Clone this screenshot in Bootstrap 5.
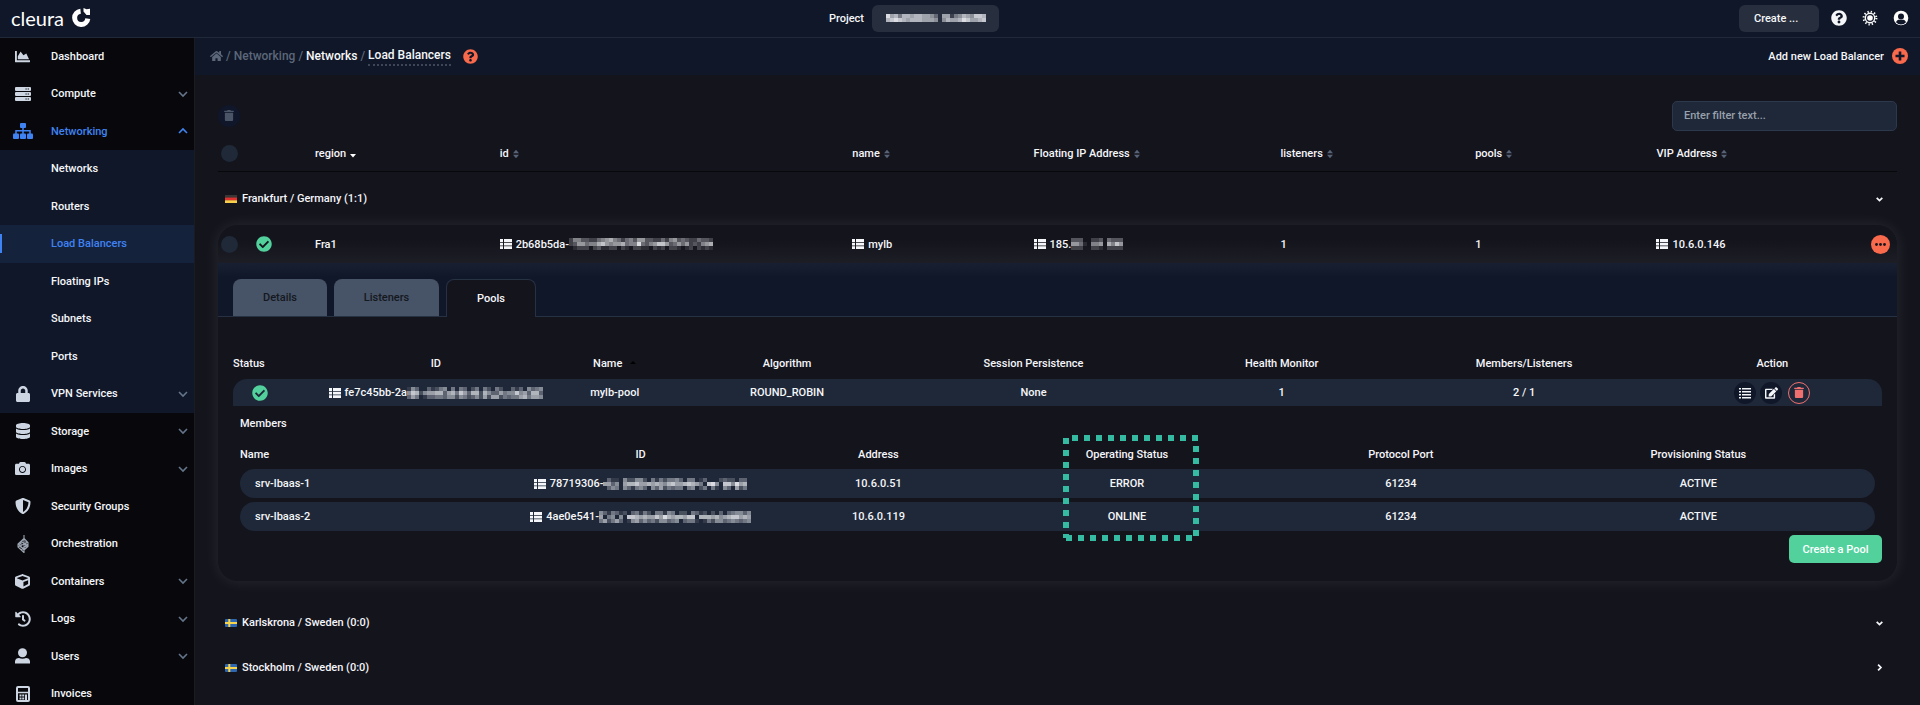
<!DOCTYPE html>
<html lang="en" data-bs-theme="dark">
<head>
<meta charset="utf-8">
<meta name="viewport" content="width=device-width, initial-scale=1">
<title>Cleura – Load Balancers</title>
<link rel="stylesheet" href="https://cdn.jsdelivr.net/npm/bootstrap@5.3.0/dist/css/bootstrap.min.css">
<style>
:root{--navy:#101728;--panel:#14141d;--slate:#1f2838;--text:#f4f6f9;--muted:#5b6678;--blue:#3f83f3;--orange:#f9694c;--green:#52d19d}
body{font-family:Roboto,"Liberation Sans",sans-serif;font-size:11px;line-height:17px;font-weight:500;color:var(--text);background:var(--panel)}
svg{display:block;flex:none}
a{color:inherit;text-decoration:none}
button{font:inherit;color:inherit}
.topbar{height:38px;background:var(--navy);border-bottom:1px solid #202938;padding-right:11px}
.topbar>div{flex:1 1 0}
.brand{font:400 20px/24px Lato,sans-serif;color:#fff;padding-left:11px;gap:8px}
.project{gap:8px;padding-right:81px}
.tools{gap:15px}
.pill{background:#272e3d;border:0;border-radius:6px;height:27px}
.pill-project{width:127px}
.pill-create{width:80px;padding:0 0 0 15px;text-align:left;margin-right:-3px}
.icon-btn{background:none;border:0;padding:0}
.side{width:195px;background:#08080c;border-right:1px solid #1b1c22;flex:none}
.side a{height:37px;display:flex;align-items:center;position:relative;padding:0 6px 0 12px}
.side li:nth-child(even) a{height:38px}
.side .ico{width:21px;display:flex;justify-content:center;margin-right:18px;color:#ccd5e1}
.side .chev{margin-left:auto;color:#64748b}
.side .open,.side .open .ico,.side .open .chev{color:var(--blue)}
.side .sub{background:var(--navy)}
.side .current{background:#15223c;color:var(--blue)}
.side .current::before{content:"";position:absolute;left:0;top:9px;width:2px;height:19px;background:var(--blue)}
.crumbs{height:37px;background:var(--navy);padding:0 12px 0 15px}
.crumbs ol{font-size:12px;gap:3px;color:#5c6779}
.crumbs .here{border-bottom:2px dotted #3c4657;color:var(--text)}
.about{color:var(--orange);margin-left:12px}
.work{padding:26px 23px 0}
.trash-all{width:22px;height:22px;border-radius:50%;background:#10172a;color:#4a5567}
.filter{width:225px;height:30px;border:1px solid #2c384b;border-radius:5px;background:var(--slate);color:var(--text);font-weight:500;padding:0 11px}
.filter::placeholder{color:#98a0ab;opacity:1}
.tick{appearance:none;width:17px;height:17px;border-radius:50%;background:#1f2937;margin:0 0 0 3px;display:block}
.grid-table{width:100%;table-layout:fixed;border-collapse:collapse}
.grid-table th,.grid-table td{padding:0;font-weight:500;white-space:nowrap}
.grid-table thead th{height:41px;padding-top:6px;border-bottom:1px solid #08080c}
.g-tick{width:33px}.g-state{width:64px}.g-region{width:11%}.g-id{width:21%}.g-name{width:10.8%}.g-fip{width:14.7%}.g-lis{width:11.6%}.g-pool{width:10.8%}.g-more{width:26px}
.region-row{height:45px;width:100%;background:none;border:0;padding:0 14px 0 7px;gap:5px}
.lb-card{border-radius:20px;box-shadow:0 0 16px rgba(255,255,255,.09);overflow:hidden;padding-bottom:18px;margin-bottom:19px}
.lb-row td{height:38px}
.lb-row{background:linear-gradient(#14141d 40%,#1d1d25)}
.state{color:var(--green)}
.state-row{margin-left:5px}
.state-pool{margin-left:19px}
.more{width:19px;height:19px;border-radius:50%;background:var(--orange);color:#14141d}
.tabs{background:linear-gradient(#172032,#101728 14px);border-bottom:1px solid #263144;padding:16px 15px 0;gap:7px}
.tabs .tab{height:37px;border:0;border-radius:8px 8px 0 0;background:#475366;color:#14181f;padding:0}
.tabs .tab.active{height:38px;margin-bottom:-1px;background:var(--panel);border:1px solid #263144;border-bottom:0;color:var(--text)}
.tab-first{width:94px}.tab-second{width:105px}.tab-third{width:90px}
.pane{padding:30px 15px 0;background:var(--panel)}
.pools{width:100%;table-layout:fixed;border-collapse:collapse;text-align:center}
.pools th,.members th{font-weight:500;padding:0;height:32px;white-space:nowrap}
.pools td{padding:0;height:27px;background:#1f2838}
.pools td:first-child{border-radius:14px 0 0 0}
.pools td:last-child{border-radius:0 14px 0 0}
.p-st{width:5.7%}.p-id{width:13.2%}.p-nm{width:8.5%}.p-al{width:12.4%}.p-se{width:17.5%}.p-he{width:12.6%}.p-me{width:16.8%}
.round{width:22px;height:22px;border-radius:50%;background:#101728;border:0;padding:0}
.round.danger{border:1px solid #f07070;background:none;color:#f07070;margin-left:2px}
.member-box{padding:0 7px}
.members{width:100%;table-layout:fixed;border-collapse:separate;border-spacing:0 4px;text-align:center}
.members th{height:21px}
.members td{padding:0;height:29px;background:#1f2838;white-space:nowrap}
.members td:first-child{border-radius:15px 0 0 15px;padding-left:15px}
.members td:last-child{border-radius:0 15px 15px 0}
.m-nm{width:15.8%}.m-id{width:17.4%}.m-ad{width:11.7%}.m-op{width:18.7%}.m-po{width:14.8%}
.members .marked{position:relative}
.outline{position:absolute;left:50%;top:-9px;margin-left:-64px;pointer-events:none}
.new-pool{height:28px;width:93px;border:0;border-radius:5px;background:var(--green);color:#fff}
.caption-row{height:34px}
</style>
</head>
<body class="vh-100 overflow-hidden d-flex flex-column">
<svg class="d-none">
<symbol id="check" viewBox="0 0 512 512"><path fill="currentColor" d="M504 256c0 136.967-111.033 248-248 248S8 392.967 8 256 119.033 8 256 8s248 111.033 248 248zM227.314 387.314l184-184c6.248-6.248 6.248-16.379 0-22.627l-22.627-22.627c-6.248-6.249-16.379-6.249-22.628 0L216 308.118l-70.059-70.059c-6.248-6.248-16.379-6.248-22.628 0l-22.627 22.627c-6.248 6.248-6.248 16.379 0 22.627l104 104c6.249 6.249 16.379 6.249 22.628.001z"/></symbol>
<symbol id="help" viewBox="0 0 512 512"><path fill="currentColor" d="M504 256c0 136.997-111.043 248-248 248S8 392.997 8 256C8 119.083 119.043 8 256 8s248 111.083 248 248zM262.655 90c-54.497 0-89.255 22.957-116.549 63.758-3.536 5.286-2.353 12.415 2.715 16.258l34.699 26.31c5.205 3.947 12.621 3.008 16.665-2.122 17.864-22.658 30.113-35.797 57.303-35.797 20.429 0 45.698 13.148 45.698 32.958 0 14.976-12.363 22.667-32.534 33.976C247.128 238.528 216 254.941 216 296v4c0 6.627 5.373 12 12 12h56c6.627 0 12-5.373 12-12v-1.333c0-28.462 83.186-29.647 83.186-106.667 0-58.002-60.165-102-116.531-102zM256 338c-25.365 0-46 20.635-46 46 0 25.364 20.635 46 46 46s46-20.636 46-46c0-25.365-20.635-46-46-46z"/></symbol>
<symbol id="trash" viewBox="0 0 448 512"><path fill="currentColor" d="M32 464a48 48 0 0 0 48 48h288a48 48 0 0 0 48-48V128H32zM432 32H312l-9.400-18.700A24 24 0 0 0 281.100 0H166.800a23.720 23.720 0 0 0-21.400 13.300L136 32H16A16 16 0 0 0 0 48v32a16 16 0 0 0 16 16h416a16 16 0 0 0 16-16V48a16 16 0 0 0-16-16z"/></symbol>
<symbol id="thlist" viewBox="0 0 12 12"><path fill="currentColor" d="M0 1h3v3H0zM4 1h8v3H4zM0 4.700h3v2.800H0zM4 4.700h8v2.800H4zM0 8.200h3V11H0zM4 8.200h8V11H4z"/></symbol>
<symbol id="down" viewBox="0 0 10 10"><path fill="none" stroke="currentColor" stroke-width="1.600" d="M1 3l4 4 4-4"/></symbol>
<symbol id="sort" viewBox="0 0 6 10"><path fill="#566276" d="M0 4.300 3 .8l3 3.500zM0 5.700h6L3 9.200z"/></symbol>
<symbol id="se" viewBox="0 0 12 8"><rect width="12" height="8" rx="1" fill="#2f66b0"/><path fill="#f6d44c" d="M3.300 0h2v8h-2zM0 3h12v2H0z"/></symbol>
</svg>

<header class="topbar d-flex align-items-center">
  <div><a href="#" class="brand d-inline-flex align-items-center">cleura
    <svg width="19" height="19" viewBox="0 0 19 19"><path fill="none" stroke="#fff" stroke-width="5" d="M8.600 3.300A6.600 6.600 0 1 0 15.800 10.600"/><path fill="#fff" d="M11.500 0l3 1.200 3.500-.4v6.200h-3.500l-3-3.400z"/></svg></a></div>
  <div class="project d-flex justify-content-center align-items-center"><span>Project</span>
    <button class="pill pill-project d-flex justify-content-center align-items-center" aria-label="Select project"><svg data-mosaic="9674776776653066145765887 7898767776665057667986678"></svg></button></div>
  <div class="tools d-flex justify-content-end align-items-center">
    <button class="pill pill-create">Create ...</button>
    <button class="icon-btn" aria-label="Help"><svg width="16" height="16"><use href="#help"/></svg></button>
    <button class="icon-btn" aria-label="Theme"><svg width="16" height="16" viewBox="0 0 16 16" fill="none" stroke="#fff"><circle cx="8" cy="8" r="2.800" fill="#fff" stroke="none"/><circle cx="8" cy="8" r="4.700" stroke-width="1.400"/><circle cx="8" cy="8" r="6.400" stroke-width="2" stroke-dasharray="1.300 2.050"/></svg></button>
    <button class="icon-btn" aria-label="Account"><svg width="16" height="16" viewBox="0 0 16 16"><circle cx="8" cy="8" r="7.300" fill="#fff"/><circle cx="8" cy="6.600" r="3" fill="#101728"/><path fill="#101728" d="M3 12.200c.8-2 2-2.500 3.200-2.500h3.600c1.200 0 2.400.5 3.200 2.500a6.500 6.500 0 0 1-10 0z"/></svg></button>
  </div>
</header>

<div class="d-flex flex-grow-1 overflow-hidden">
<nav class="side overflow-hidden">
  <ul class="list-unstyled m-0">
    <li><a href="#"><span class="ico"><svg width="15" height="15" viewBox="0 0 512 512"><path fill="currentColor" d="M500 384c6.600 0 12 5.400 12 12v40c0 6.600-5.400 12-12 12H12c-6.600 0-12-5.400-12-12V76c0-6.600 5.400-12 12-12h40c6.600 0 12 5.400 12 12v308h436zM372.700 159.500L288 216l-85.300-113.700c-5.100-6.800-15.500-6.300-19.900 1L96 248v104h384l-89.900-187.800c-3.200-6.500-11.400-8.700-17.400-4.700z"/></svg></span>Dashboard</a></li>
    <li><a href="#"><span class="ico"><svg width="16" height="14" viewBox="0 0 16 14"><g fill="currentColor"><rect width="16" height="4" rx="1"/><rect y="5" width="16" height="4" rx="1"/><rect y="10" width="16" height="4" rx="1"/></g><path stroke="#08080c" d="M10.500 2h1.200m1 0h1.200M10.500 7h1.200m1 0h1.200M10.500 12h1.200m1 0h1.200"/></svg></span>Compute<svg class="chev" width="10" height="10"><use href="#down"/></svg></a></li>
    <li><a href="#" class="open"><span class="ico"><svg width="20" height="16" viewBox="0 0 20 16" fill="currentColor"><rect x="7" width="6" height="5" rx="1"/><rect y="10.500" width="6" height="5.500" rx="1"/><rect x="7" y="10.500" width="6" height="5.500" rx="1"/><rect x="14" y="10.500" width="6" height="5.500" rx="1"/><path fill="none" stroke="currentColor" stroke-width="1.500" d="M10 4v7M3 11V7.800h14V11"/></svg></span>Networking<svg class="chev" width="10" height="10" viewBox="0 0 10 10"><path fill="none" stroke="currentColor" stroke-width="1.600" d="M1 7l4-4 4 4"/></svg></a></li>
    <li><a href="#" class="sub"><span class="ico"></span>Networks</a></li>
    <li><a href="#" class="sub"><span class="ico"></span>Routers</a></li>
    <li><a href="#" class="current"><span class="ico"></span>Load Balancers</a></li>
    <li><a href="#" class="sub"><span class="ico"></span>Floating IPs</a></li>
    <li><a href="#" class="sub"><span class="ico"></span>Subnets</a></li>
    <li><a href="#" class="sub"><span class="ico"></span>Ports</a></li>
    <li><a href="#" class="sub"><span class="ico"><svg width="14" height="16" viewBox="0 0 448 512"><path fill="currentColor" d="M400 224h-24v-72C376 68.200 307.800 0 224 0S72 68.200 72 152v72H48c-26.500 0-48 21.500-48 48v192c0 26.500 21.500 48 48 48h352c26.500 0 48-21.500 48-48V272c0-26.500-21.500-48-48-48zm-104 0H152v-72c0-39.700 32.300-72 72-72s72 32.300 72 72v72z"/></svg></span>VPN Services<svg class="chev" width="10" height="10"><use href="#down"/></svg></a></li>
    <li><a href="#"><span class="ico"><svg width="14" height="16" viewBox="0 0 448 512"><path fill="currentColor" d="M448 73.143v45.714C448 159.143 347.667 192 224 192S0 159.143 0 118.857V73.143C0 32.857 100.333 0 224 0s224 32.857 224 73.143zM448 176v102.857C448 319.143 347.667 352 224 352S0 319.143 0 278.857V176c48.125 33.143 136.208 48.572 224 48.572S399.874 209.143 448 176zm0 160v102.857C448 479.143 347.667 512 224 512S0 479.143 0 438.857V336c48.125 33.143 136.208 48.572 224 48.572S399.874 369.143 448 336z"/></svg></span>Storage<svg class="chev" width="10" height="10"><use href="#down"/></svg></a></li>
    <li><a href="#"><span class="ico"><svg width="15" height="15" viewBox="0 0 512 512"><path fill="currentColor" d="M512 144v288c0 26.500-21.500 48-48 48H48c-26.500 0-48-21.500-48-48V144c0-26.500 21.500-48 48-48h88l12.300-32.900c7-18.700 24.900-31.100 44.900-31.100h125.500c20 0 37.900 12.400 44.900 31.100L376 96h88c26.500 0 48 21.500 48 48zM376 288c0-66.200-53.800-120-120-120s-120 53.800-120 120 53.800 120 120 120 120-53.800 120-120zm-32 0c0 48.500-39.500 88-88 88s-88-39.500-88-88 39.500-88 88-88 88 39.500 88 88z"/></svg></span>Images<svg class="chev" width="10" height="10"><use href="#down"/></svg></a></li>
    <li><a href="#"><span class="ico"><svg width="16" height="16" viewBox="0 0 512 512"><path fill="currentColor" d="M466.500 83.700l-192-80a48.150 48.150 0 0 0-36.900 0l-192 80C27.700 91.100 16 108.600 16 128c0 198.500 114.500 335.700 221.500 380.300 11.800 4.900 25.100 4.900 36.900 0C360.100 472.600 496 349.300 496 128c0-19.400-11.700-36.900-29.500-44.300zM256.100 446.300l-.1-381 175.900 73.300c-3.300 151.400-82.100 261.100-175.800 307.700z"/></svg></span>Security Groups</a></li>
    <li><a href="#"><span class="ico"><svg width="14" height="20" viewBox="0 0 14 20" fill="none" stroke="#9aa3af" stroke-width="1.100"><path d="M8 1v3.500L2 10v3l6 5.500M8 4.500l4 4v4L8 16v3M2 10l6 5.500 4-3M5 7.200l7 5.600M2 13l10-5M5 16l7-6M5 7.500V14M8 5v11M10 6.500V14M8 4.500L3 11l5 5"/></svg></span>Orchestration</a></li>
    <li><a href="#"><span class="ico"><svg width="15" height="15" viewBox="0 0 512 512"><path fill="currentColor" d="M239.100 6.300l-208 78c-18.700 7-31.100 25-31.100 45v225.100c0 18.200 10.300 34.800 26.500 42.900l208 104c13.500 6.800 29.400 6.800 42.900 0l208-104c16.300-8.100 26.500-24.800 26.500-42.900V129.300c0-20-12.400-37.900-31.100-44.900l-208-78C262 2.200 250 2.200 239.100 6.300zM256 68.400l192 72v1.100l-192 78-192-78v-1.100l192-72zm32 356V275.500l160-65v133.900l-160 80z"/></svg></span>Containers<svg class="chev" width="10" height="10"><use href="#down"/></svg></a></li>
    <li><a href="#"><span class="ico"><svg width="16" height="16" viewBox="0 0 512 512"><path fill="currentColor" d="M504 255.531c.253 136.640-111.180 248.372-247.820 248.468-59.015.042-113.223-20.530-155.822-54.911-11.077-8.940-11.905-25.541-1.839-35.607l11.267-11.267c8.609-8.609 22.353-9.551 31.891-1.984C173.062 425.135 212.781 440 256 440c101.705 0 184-82.311 184-184 0-101.705-82.311-184-184-184-48.814 0-93.149 18.969-126.068 49.932l50.754 50.754c10.080 10.080 2.941 27.314-11.313 27.314H24c-8.837 0-16-7.163-16-16V38.627c0-14.254 17.234-21.393 27.314-11.314l49.372 49.372C129.209 34.136 189.552 8 256 8c136.810 0 247.747 110.780 248 247.531zm-180.912 78.784l9.823-12.630c8.138-10.463 6.253-25.542-4.210-33.679L288 256.349V152c0-13.255-10.745-24-24-24h-16c-13.255 0-24 10.745-24 24v135.651l65.409 50.874c10.463 8.137 25.541 6.253 33.679-4.210z"/></svg></span>Logs<svg class="chev" width="10" height="10"><use href="#down"/></svg></a></li>
    <li><a href="#"><span class="ico"><svg width="15" height="16" viewBox="0 0 15 16" fill="currentColor"><circle cx="7.500" cy="4.800" r="4.500"/><path d="M0 15.500v-2C0 11 2 10 4 10c2 1 5 1 7 0 2 0 4 1 4 3.500v2z"/></svg></span>Users<svg class="chev" width="10" height="10"><use href="#down"/></svg></a></li>
    <li><a href="#"><span class="ico"><svg width="14" height="16" viewBox="0 0 14 16"><rect x="1" y="1" width="12" height="14" rx="1" fill="none" stroke="currentColor" stroke-width="2"/><path stroke="currentColor" stroke-width="1.500" d="M1 6.500h12"/><path fill="currentColor" d="M3.500 8.500h2v2h-2zM6.200 8.500h2v2h-2zM9 8.500h2V14H9zM3.500 11.500h2v2h-2zM6.200 11.500h2v2h-2z"/></svg></span>Invoices</a></li>
  </ul>
</nav>

<main class="flex-grow-1 overflow-hidden">
  <div class="crumbs d-flex align-items-center justify-content-between">
    <div class="d-flex align-items-center">
      <ol class="list-unstyled d-flex align-items-center m-0">
        <li><a href="#" aria-label="Home"><svg width="13" height="12" viewBox="0 0 576 512"><path fill="currentColor" d="M280.370 148.260L96 300.110V464a16 16 0 0 0 16 16l112.060-.29a16 16 0 0 0 15.920-16V368a16 16 0 0 1 16-16h64a16 16 0 0 1 16 16v95.640a16 16 0 0 0 16 16.050L464 480a16 16 0 0 0 16-16V300L295.670 148.260a12.190 12.190 0 0 0-15.300 0zM571.600 251.470L488 182.560V44.050a12 12 0 0 0-12-12h-56a12 12 0 0 0-12 12v72.610L318.470 43a48 48 0 0 0-61 0L4.340 251.470a12 12 0 0 0-1.600 16.900l25.500 31A12 12 0 0 0 45.150 301l235.220-193.740a12.190 12.190 0 0 1 15.300 0L530.900 301a12 12 0 0 0 16.900-1.600l25.500-31a12 12 0 0 0-1.700-16.930z"/></svg></a></li>
        <li>/</li><li><a href="#">Networking</a></li><li>/</li><li><a href="#" class="text-light">Networks</a></li><li>/</li><li class="here">Load Balancers</li>
      </ol>
      <button class="icon-btn about" aria-label="About load balancers"><svg width="15" height="15"><use href="#help"/></svg></button>
    </div>
    <button class="icon-btn d-flex align-items-center gap-2">Add new Load Balancer
      <svg width="16" height="16" viewBox="0 0 16 16"><circle cx="8" cy="8" r="8" fill="#f9694c"/><path stroke="#101728" stroke-width="2.600" d="M8 3.500v9M3.500 8h9"/></svg></button>
  </div>

  <div class="work">
    <div class="d-flex justify-content-between align-items-center">
      <button class="icon-btn trash-all d-flex justify-content-center align-items-center" aria-label="Delete selected"><svg width="10" height="11"><use href="#trash"/></svg></button>
      <input class="filter" type="text" placeholder="Enter filter text..." aria-label="Filter">
    </div>

    <table class="grid-table">
      <colgroup><col class="g-tick"><col class="g-state"><col class="g-region"><col class="g-id"><col class="g-name"><col class="g-fip"><col class="g-lis"><col class="g-pool"><col><col class="g-more"></colgroup>
      <thead><tr>
        <th><input type="checkbox" class="tick" aria-label="Select all"></th><th></th>
        <th><span class="d-flex align-items-center gap-1">region <svg width="6" height="8" viewBox="0 0 6 8"><path fill="#fff" d="M0 4h6L3 7.500z"/></svg></span></th>
        <th><span class="d-flex align-items-center gap-1">id <svg width="6" height="10"><use href="#sort"/></svg></span></th>
        <th><span class="d-flex align-items-center gap-1">name <svg width="6" height="10"><use href="#sort"/></svg></span></th>
        <th><span class="d-flex align-items-center gap-1">Floating IP Address <svg width="6" height="10"><use href="#sort"/></svg></span></th>
        <th><span class="d-flex align-items-center gap-1">listeners <svg width="6" height="10"><use href="#sort"/></svg></span></th>
        <th><span class="d-flex align-items-center gap-1">pools <svg width="6" height="10"><use href="#sort"/></svg></span></th>
        <th><span class="d-flex align-items-center gap-1">VIP Address <svg width="6" height="10"><use href="#sort"/></svg></span></th><th></th>
      </tr></thead>
    </table>

    <button class="region-row d-flex align-items-center my-1"><svg width="12" height="8" viewBox="0 0 12 8"><rect width="12" height="3" fill="#3b3636"/><rect y="2.600" width="12" height="3" fill="#e0312f"/><rect y="5.300" width="12" height="2.700" fill="#f8cf4b"/></svg>Frankfurt / Germany (1:1)<svg class="ms-auto" width="7" height="7" viewBox="0 0 10 10"><path fill="none" stroke="currentColor" stroke-width="2.500" d="M1 4l4 4 4-4"/></svg></button>

    <section class="lb-card">
      <table class="grid-table lb-row">
        <colgroup><col class="g-tick"><col class="g-state"><col class="g-region"><col class="g-id"><col class="g-name"><col class="g-fip"><col class="g-lis"><col class="g-pool"><col><col class="g-more"></colgroup>
        <tbody><tr>
          <td><input type="checkbox" class="tick" aria-label="Select mylb"></td>
          <td><svg width="16" height="16" class="state state-row"><use href="#check"/></svg></td>
          <td>Fra1</td>
          <td><span class="d-flex align-items-center gap-1"><svg width="12" height="12"><use href="#thlist"/></svg><span class="d-flex align-items-center">2b68b5da-<svg data-mosaic="255332245675424536633224256343224332 236645578656674559435688634646232567 012220231122021022110212022101202121"></svg></span></span></td>
          <td><span class="d-flex align-items-center gap-1"><svg width="12" height="12"><use href="#thlist"/></svg>mylb</span></td>
          <td><span class="d-flex align-items-center gap-1"><svg width="12" height="12"><use href="#thlist"/></svg><span class="d-flex align-items-center">185.<svg data-mosaic="3330022304333 6641055607586 2220022102222"></svg></span></span></td>
          <td>1</td><td>1</td>
          <td><span class="d-flex align-items-center gap-1"><svg width="12" height="12"><use href="#thlist"/></svg>10.6.0.146</span></td>
          <td><button class="icon-btn more d-flex justify-content-center align-items-center" aria-label="More"><svg width="11" height="3" viewBox="0 0 11 3" fill="currentColor"><circle cx="1.500" cy="1.500" r="1.400"/><circle cx="5.500" cy="1.500" r="1.400"/><circle cx="9.500" cy="1.500" r="1.400"/></svg></button></td>
        </tr></tbody>
      </table>

      <div class="tabs d-flex" role="tablist">
        <button class="tab tab-first" role="tab">Details</button>
        <button class="tab tab-second" role="tab">Listeners</button>
        <button class="tab tab-third active" role="tab" aria-selected="true">Pools</button>
      </div>

      <div class="pane">
        <table class="pools">
          <colgroup><col class="p-st"><col class="p-id"><col class="p-nm"><col class="p-al"><col class="p-se"><col class="p-he"><col class="p-me"><col></colgroup>
          <thead><tr><th class="text-start">Status</th><th>ID</th><th><span class="d-flex justify-content-center align-items-center gap-2">Name <svg width="6" height="8" viewBox="0 0 6 8"><path fill="#000" d="M0 5h6L3 2z"/></svg></span></th><th>Algorithm</th><th>Session Persistence</th><th>Health Monitor</th><th>Members/Listeners</th><th>Action</th></tr></thead>
          <tbody><tr>
            <td><svg width="16" height="16" class="state state-pool"><use href="#check"/></svg></td>
            <td><span class="d-flex justify-content-center align-items-center gap-1 text-nowrap"><svg width="12" height="12"><use href="#thlist"/></svg><span class="d-flex align-items-center">fe7c45bb-2a<svg data-mosaic="1530031245040430240420420031305345 5872566773674863772753364558563773 3640133443552542352626624344674665"></svg></span></span></td>
            <td>mylb-pool</td><td>ROUND_ROBIN</td><td>None</td><td>1</td><td>2 / 1</td>
            <td><span class="d-flex justify-content-center gap-1">
              <button class="round d-flex justify-content-center align-items-center" aria-label="Members"><svg width="12" height="12" viewBox="0 0 12 12"><path fill="currentColor" d="M0 1h2v1.500H0zM3 1h9v1.500H3zM0 4h2v1.500H0zM3 4h9v1.500H3zM0 7h2v1.500H0zM3 7h9v1.500H3zM0 10h2v1.500H0zM3 10h9v1.500H3z"/></svg></button>
              <button class="round d-flex justify-content-center align-items-center" aria-label="Edit"><svg width="13" height="12" viewBox="0 0 576 512"><path fill="currentColor" d="M402.600 83.200l90.200 90.200c3.800 3.800 3.800 10 0 13.800L274.400 405.600l-92.800 10.300c-12.400 1.400-22.900-9.100-21.500-21.500l10.300-92.800L388.800 83.200c3.800-3.800 10-3.800 13.800 0zm162-22.900l-48.800-48.800c-15.200-15.200-39.900-15.200-55.200 0l-35.400 35.400c-3.800 3.800-3.800 10 0 13.800l90.200 90.200c3.800 3.800 10 3.800 13.800 0l35.400-35.400c15.200-15.300 15.200-40 0-55.200zM384 346.200V448H64V128h229.800c3.200 0 6.200-1.300 8.500-3.500l40-40c7.600-7.600 2.200-20.500-8.500-20.500H48C21.500 64 0 85.500 0 112v352c0 26.500 21.500 48 48 48h352c26.500 0 48-21.500 48-48V306.200c0-10.700-12.900-16-20.500-8.500l-40 40c-2.200 2.300-3.500 5.300-3.500 8.500z"/></svg></button>
              <button class="round danger d-flex justify-content-center align-items-center" aria-label="Delete"><svg width="10" height="11"><use href="#trash"/></svg></button>
            </span></td>
          </tr></tbody>
        </table>

        <div class="member-box">
          <div class="caption-row d-flex align-items-center">Members</div>
          <table class="members">
            <colgroup><col class="m-nm"><col class="m-id"><col class="m-ad"><col class="m-op"><col class="m-po"><col></colgroup>
            <thead><tr><th class="text-start">Name</th><th>ID</th><th>Address</th>
              <th class="marked">Operating Status
                <svg class="outline" width="136" height="106" viewBox="0 0 136 106" fill="none" stroke="#36bba3" stroke-width="6" stroke-dasharray="6 6"><path d="M9 3H136M133 11V101M129 103H0M3 3V103"/></svg></th>
              <th>Protocol Port</th><th>Provisioning Status</th></tr></thead>
            <tbody>
              <tr><td class="text-start">srv-lbaas-1</td><td><span class="d-flex justify-content-center align-items-center gap-1"><svg width="12" height="12"><use href="#thlist"/></svg><span class="d-flex align-items-center">78719306-<svg data-mosaic="031105225520414244530440130002322033 663506778667676578667876408950885967 035405314530536243440450240410530624"></svg></span></span></td><td>10.6.0.51</td><td>ERROR</td><td>61234</td><td>ACTIVE</td></tr>
              <tr><td class="text-start">srv-lbaas-2</td><td><span class="d-flex justify-content-center align-items-center gap-1"><svg width="12" height="12"><use href="#thlist"/></svg><span class="d-flex align-items-center">4ae0e541-<svg data-mosaic="53143120341420441540220431202030345535 60450508876766869767768807776756788676 46246301563534255345034410142553454345"></svg></span></span></td><td>10.6.0.119</td><td>ONLINE</td><td>61234</td><td>ACTIVE</td></tr>
            </tbody>
          </table>
        </div>
        <div class="d-flex justify-content-end"><button class="new-pool">Create a Pool</button></div>
      </div>
    </section>

    <button class="region-row d-flex align-items-center"><svg width="12" height="8"><use href="#se"/></svg>Karlskrona / Sweden (0:0)<svg class="ms-auto" width="7" height="7" viewBox="0 0 10 10"><path fill="none" stroke="currentColor" stroke-width="2.500" d="M1 4l4 4 4-4"/></svg></button>
    <button class="region-row d-flex align-items-center"><svg width="12" height="8"><use href="#se"/></svg>Stockholm / Sweden (0:0)<svg class="ms-auto" width="7" height="7" viewBox="0 0 10 10"><path fill="none" stroke="currentColor" stroke-width="2.500" d="M3 1l4 4-4 4"/></svg></button>
  </div>
</main>
</div>

<script src="https://cdn.jsdelivr.net/npm/bootstrap@5.3.0/dist/js/bootstrap.bundle.min.js"></script>
<script>
// Redacted values: each digit is the brightness of one 4px cell.
document.querySelectorAll('[data-mosaic]').forEach(function (svg) {
  var rows = svg.dataset.mosaic.split(' ');
  svg.setAttribute('width', rows[0].length * 4);
  svg.setAttribute('height', rows.length * 4);
  svg.innerHTML = rows.map(function (row, y) {
    return row.split('').map(function (d, x) {
      return '<rect x="' + x * 4 + '" y="' + y * 4 + '" width="4" height="4" fill="#eef0f4" fill-opacity="' + d / 10 + '"/>';
    }).join('');
  }).join('');
});
</script>
</body>
</html>
